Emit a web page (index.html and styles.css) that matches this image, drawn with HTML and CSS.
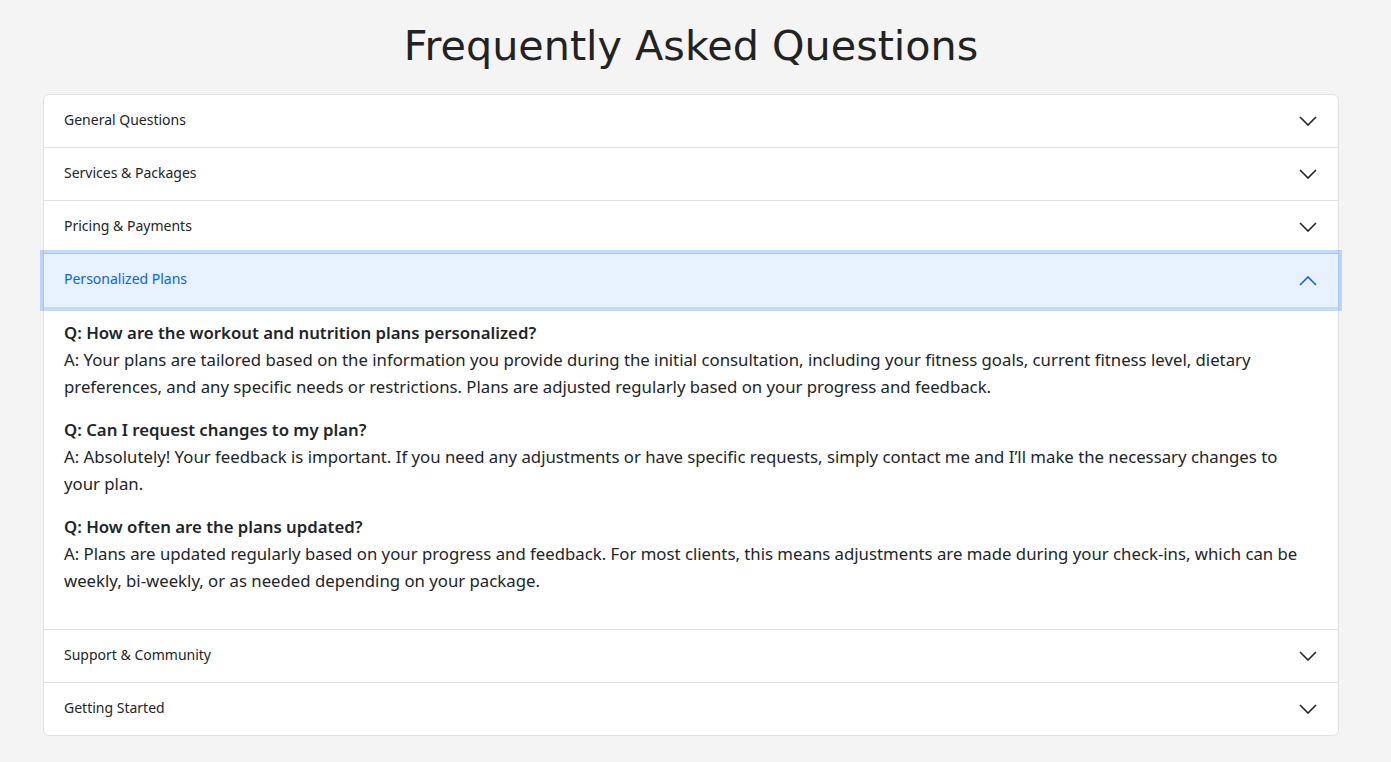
FILE: index.html
```html
<!DOCTYPE html>
<html lang="en">
<head>
<meta charset="utf-8">
<title>FAQ</title>
<link rel="stylesheet" href="styles.css">
</head>
<body>
<main class="faq">
  <h1 class="faq-title">Frequently Asked Questions</h1>
  <div class="accordion">
    <div class="acc-item">
      <button class="acc-btn"><span>General Questions</span>
        <svg class="chev" viewBox="0 0 18 10"><polyline points="1,1 9,9 17,1"/></svg></button>
    </div>
    <div class="acc-item">
      <button class="acc-btn"><span>Services &amp; Packages</span>
        <svg class="chev" viewBox="0 0 18 10"><polyline points="1,1 9,9 17,1"/></svg></button>
    </div>
    <div class="acc-item">
      <button class="acc-btn"><span>Pricing &amp; Payments</span>
        <svg class="chev" viewBox="0 0 18 10"><polyline points="1,1 9,9 17,1"/></svg></button>
    </div>
    <div class="acc-item">
      <button class="acc-btn open"><span>Personalized Plans</span>
        <svg class="chev" viewBox="0 0 18 10"><polyline points="1,9 9,1 17,9"/></svg></button>
      <div class="acc-body">
        <p><strong>Q: How are the workout and nutrition plans personalized?</strong><br>
        A: Your plans are tailored based on the information you provide during the initial consultation, including your fitness goals, current fitness level, dietary preferences, and any specific needs or restrictions. Plans are adjusted regularly based on your progress and feedback.</p>
        <p><strong>Q: Can I request changes to my plan?</strong><br>
        A: Absolutely! Your feedback is important. If you need any adjustments or have specific requests, simply contact me and I’ll make the necessary changes to your plan.</p>
        <p><strong>Q: How often are the plans updated?</strong><br>
        A: Plans are updated regularly based on your progress and feedback. For most clients, this means adjustments are made during your check-ins, which can be weekly, bi-weekly, or as needed depending on your package.</p>
      </div>
    </div>
    <div class="acc-item">
      <button class="acc-btn"><span>Support &amp; Community</span>
        <svg class="chev" viewBox="0 0 18 10"><polyline points="1,1 9,9 17,1"/></svg></button>
    </div>
    <div class="acc-item">
      <button class="acc-btn"><span>Getting Started</span>
        <svg class="chev" viewBox="0 0 18 10"><polyline points="1,1 9,9 17,1"/></svg></button>
    </div>
  </div>
</main>
</body>
</html>
```

FILE: styles.css
```css
* { box-sizing: border-box; }
html, body { margin: 0; }
body {
  background: #f4f4f4;
  color: #212529;
  font-family: "Noto Sans", "Open Sans", sans-serif;
}
.faq {
  width: 1296px;
  margin-left: 43px;
}
.faq-title {
  margin: 0 0 24px;
  padding-top: 22px;
  text-align: center;
  font-family: "DejaVu Sans", sans-serif;
  font-weight: 400;
  font-size: 41.3px;
  line-height: 48px;
  color: #222;
}
.accordion {
  background: #fff;
  border: 1px solid #dee2e6;
  border-radius: 6px;
}
.acc-item + .acc-item { border-top: 1px solid #dee2e6; }
.acc-btn {
  display: flex;
  align-items: center;
  justify-content: space-between;
  width: 100%;
  height: 52px;
  padding: 0 21px 4px 20px;
  border: 0;
  background: transparent;
  font-family: "Noto Sans", sans-serif;
  font-size: 14px;
  color: #212529;
  text-align: left;
  cursor: pointer;
}
.acc-btn .chev { margin-top: 4px; }
.acc-btn.open {
  position: relative;
  z-index: 2;
  height: 53px;
  background: #e7f1ff;
  color: #0c63e4;
  box-shadow: 0 0 0 4px rgba(13, 110, 253, .25);
}
.chev {
  width: 18px;
  height: 10px;
  fill: none;
  stroke: currentColor;
  stroke-width: 1.6;
}
.acc-body {
  padding: 12px 26px 19px 20px;
  font-size: 16.75px;
  line-height: 27px;
}
.acc-body p { margin: 0 0 16px; }
.acc-body strong { font-weight: 600; }
```
